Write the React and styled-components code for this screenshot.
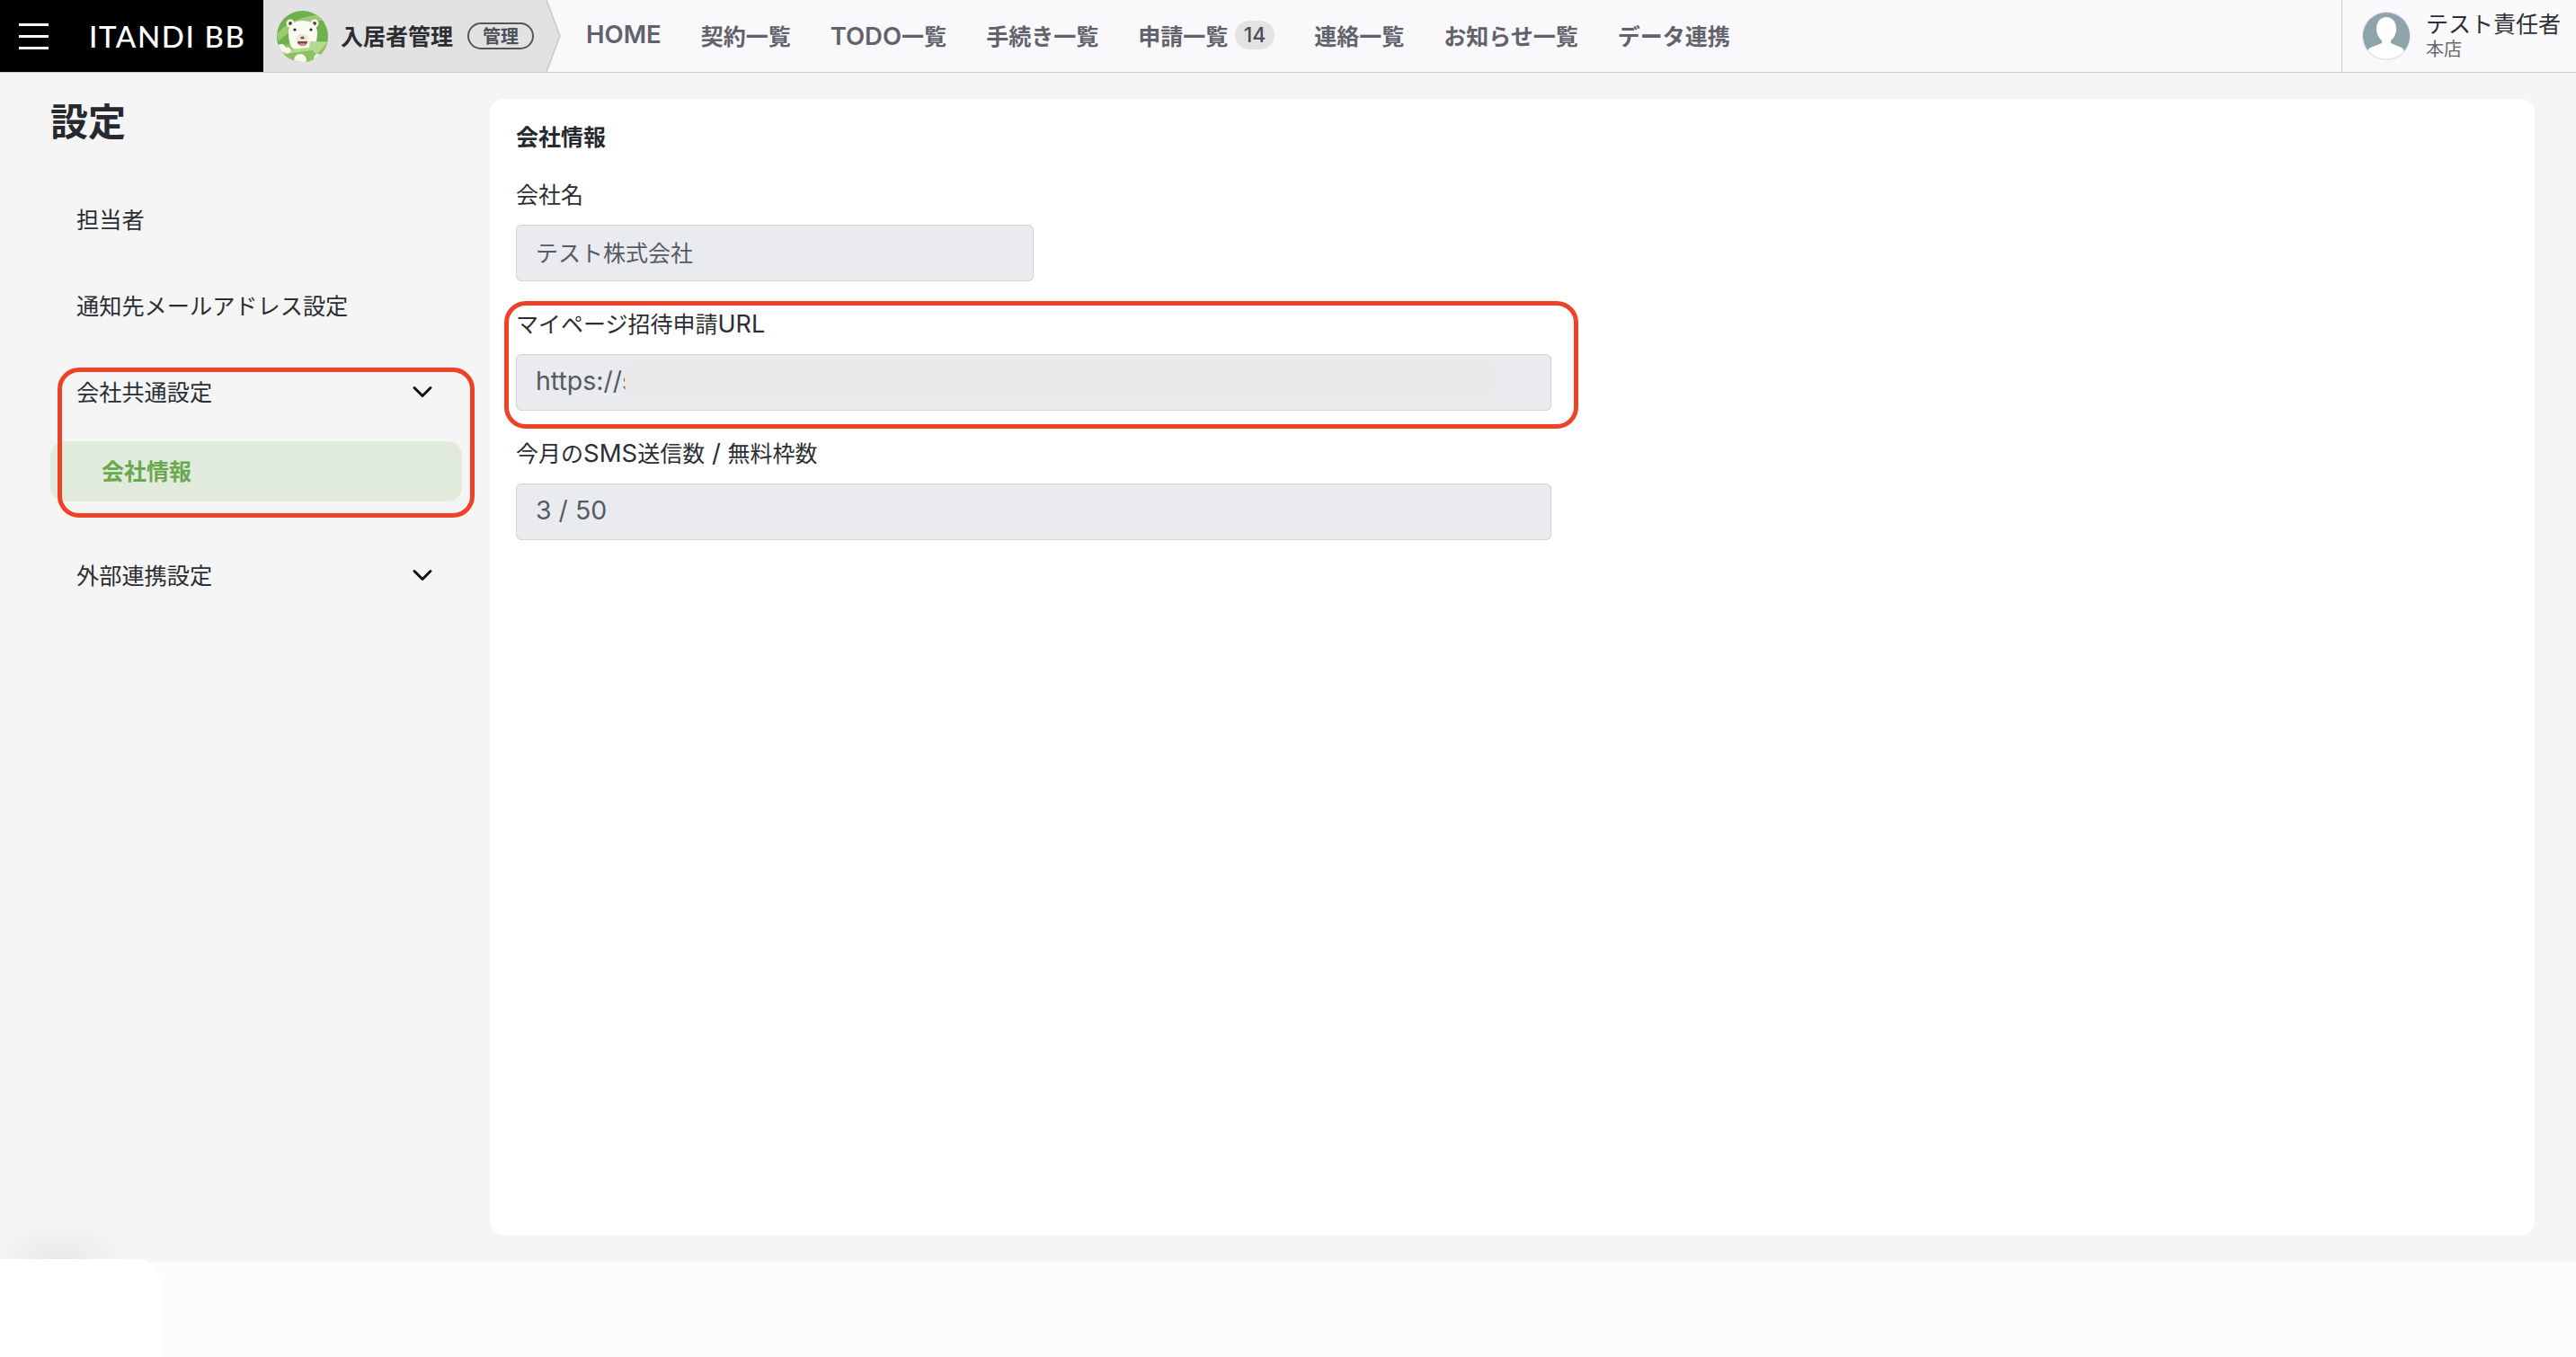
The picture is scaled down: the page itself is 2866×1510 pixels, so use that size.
import React from "react";
import styled, { createGlobalStyle } from "styled-components";
import { ChevronDown } from "lucide-react";

const GlobalStyle = createGlobalStyle`
  html, body {
    margin: 0;
    padding: 0;
    background: #f5f5f5;
  }
  * {
    box-sizing: border-box;
  }
  body {
    font-family: Inter, "Noto Sans CJK JP", sans-serif;
    color: #26292e;
  }
`;

const Page = styled.div`
  width: 2866px;
  height: 1510px;
  display: flex;
  flex-direction: column;
  overflow: hidden;
`;

const Header = styled.header`
  height: 81px;
  flex: none;
  display: flex;
  align-items: stretch;
  background: #f9f9fb;
  border-bottom: 1px solid #cccccc;
`;

const Brand = styled.div`
  width: 293px;
  flex: none;
  display: flex;
  align-items: center;
  gap: 45px;
  padding-left: 21px;
  background: #000;
`;

const Burger = styled.div`
  width: 33px;
  height: 29px;
  display: flex;
  flex-direction: column;
  justify-content: space-between;

  span {
    display: block;
    height: 3px;
    background: #fff;
  }
`;

const Logo = styled.div`
  font-family: Lato, sans-serif;
  font-size: 33px;
  font-weight: 500;
  letter-spacing: 1.6px;
  color: #fff;
  white-space: nowrap;
`;

const Product = styled.div`
  width: 315px;
  flex: none;
  display: flex;
  align-items: center;
  padding-left: 15px;
  background: #e2e2e2;
`;

const ProductName = styled.div`
  margin-left: 14px;
  padding-bottom: 3px;
  font-size: 25px;
  font-weight: 700;
  color: #2b2d31;
  white-space: nowrap;
`;

const RolePill = styled.div`
  margin-left: 16px;
  width: 74px;
  height: 30px;
  display: flex;
  align-items: center;
  justify-content: center;
  padding-bottom: 2px;
  border: 2px solid #55565c;
  border-radius: 15px;
  font-size: 20px;
  font-weight: 700;
  color: #4f5056;
`;

const Tip = styled.svg`
  flex: none;
  display: block;
  width: 16px;
  height: 80px;
`;

const Nav = styled.nav`
  display: flex;
  align-items: center;
  gap: 44px;
  margin-left: 28px;
  padding-bottom: 3px;
`;

const NavItem = styled.div`
  display: flex;
  align-items: center;
  gap: 8px;
  font-size: 25px;
  font-weight: 700;
  color: #62626c;
  white-space: nowrap;
`;

// latin runs sit larger than the japanese around them in the original font
const Latin = styled.span`
  font-size: ${(p) => p.$size || 27.5}px;
  font-weight: ${(p) => p.$weight || "inherit"};
  line-height: 1;
`;

const Badge = styled.span`
  width: 44px;
  height: 32px;
  display: flex;
  align-items: center;
  justify-content: center;
  border-radius: 16px;
  background: #e3e3e3;
  font-size: 23px;
  font-weight: 500;
  color: #4d4d55;
`;

const UserBox = styled.div`
  width: 261px;
  margin-left: auto;
  flex: none;
  display: flex;
  align-items: center;
  gap: 16px;
  padding-left: 21px;
  border-left: 1px solid #cccccc;
`;

const UserText = styled.div`
  display: flex;
  flex-direction: column;
  padding-bottom: 3px;
`;

const UserName = styled.div`
  font-size: 25px;
  line-height: 32px;
  color: #2d2f34;
  white-space: nowrap;
`;

const UserShop = styled.div`
  font-size: 20px;
  line-height: 24px;
  color: #66676d;
`;

const Body = styled.div`
  flex: 1;
  display: flex;
  min-height: 0;
`;

const Sidebar = styled.aside`
  width: 545px;
  flex: none;
  padding: 27px 31px 0 56px;
`;

const Title = styled.h1`
  margin: 0 0 32px;
  font-size: 42px;
  line-height: 56px;
  font-weight: 700;
  color: #26292e;
`;

const MenuRow = styled.div`
  height: 96px;
  display: flex;
  align-items: center;
  justify-content: space-between;
  padding: 0 26px 3px 29px;
  font-size: 25.2px;
  color: #2b2e33;
  white-space: nowrap;

  svg {
    margin-top: 3px;
    color: #111;
  }
`;

const MenuGroup = styled.div`
  position: relative;
  padding-bottom: 34px;
`;

const SubItem = styled.div`
  height: 67px;
  margin-top: 7px;
  display: flex;
  align-items: center;
  padding: 0 0 4px 57px;
  border-radius: 16px;
  background: #e0ebdb;
  font-size: 25px;
  font-weight: 700;
  color: #6aa84f;
`;

// red annotation drawn over the screenshot
const Highlight = styled.div`
  position: absolute;
  top: ${(p) => p.$top}px;
  right: ${(p) => p.$right}px;
  bottom: ${(p) => p.$bottom}px;
  left: ${(p) => p.$left}px;
  border: 5px solid #ee4227;
  border-radius: 24px;
  pointer-events: none;
`;

const Main = styled.main`
  flex: 1;
  padding: 29px 46px 29px 0;
`;

const Card = styled.section`
  height: 100%;
  padding: 25px 29px;
  border-radius: 16px;
  background: #fff;
`;

const CardTitle = styled.h2`
  margin: 0 0 29px;
  font-size: 25px;
  line-height: 36px;
  font-weight: 700;
  color: #26292e;
`;

const Field = styled.div`
  position: relative;
  width: ${(p) => (p.$wide ? 1152 : 576)}px;
  margin-bottom: 31px;
`;

const Label = styled.div`
  margin-bottom: 16px;
  font-size: 25px;
  line-height: 34px;
  color: #2b2e33;
  white-space: nowrap;
`;

const Input = styled.div`
  position: relative;
  height: 63px;
  display: flex;
  align-items: center;
  padding: 0 21px 3px;
  border: 1px solid #cfd3d8;
  border-radius: 6px;
  background: #e9ebee;
  font-size: 25px;
  color: #555b62;
  overflow: hidden;
  white-space: pre;
`;

// blur patch hiding the rest of the address
const Smudge = styled.div`
  position: absolute;
  top: 6px;
  bottom: 14px;
  left: 120px;
  right: 60px;
  border-radius: 14px;
  background: #e9e9e9;
`;

const Footer = styled.footer`
  position: relative;
  height: 106px;
  flex: none;
  background: #fcfcfc;
`;

const FooterTab = styled.div`
  position: absolute;
  top: -3px;
  bottom: 0;
  left: 0;
  width: 178px;
  border-top-right-radius: 24px;
  background: #fff;

  &::before {
    content: "";
    position: absolute;
    top: -42px;
    left: 0;
    width: 150px;
    height: 42px;
    background: radial-gradient(ellipse 75px 42px at 45% 100%, #e8e8e8, rgba(245, 245, 245, 0));
  }
`;

const BearIcon = styled.svg`
  flex: none;
  display: block;
  width: 57px;
  height: 57px;
`;

const AvatarIcon = styled.svg`
  flex: none;
  display: block;
  width: 56px;
  height: 56px;
`;

const Bear = () => (
  <BearIcon viewBox="0 0 57 57">
    <defs>
      <clipPath id="bearClip">
        <circle cx="28.5" cy="28.5" r="28.5" />
      </clipPath>
    </defs>
    <g clipPath="url(#bearClip)">
      <rect width="57" height="57" fill="#6fb04c" />
      <path d="M0 26C12 12 30 5 52 4l5 6C36 11 18 18 2 34Z" fill="#9ccb74" />
      <path d="M0 42l14-6 32 6 11-8v23H0Z" fill="#8cc063" />
      <circle cx="15" cy="14" r="4.5" fill="#f8f6ec" />
      <circle cx="15" cy="14" r="2" fill="#55493f" />
      <circle cx="42" cy="14" r="4.5" fill="#f8f6ec" />
      <circle cx="42" cy="14" r="2" fill="#55493f" />
      <path d="M13 24c0-9 7-13 15.500-13S45 15 45 24c0 6-1 11-3 15-3 4-8 6-13.500 6S18 43 15.500 39C14 35 13 30 13 24Z" fill="#fbfaf2" />
      <circle cx="20" cy="21" r="1.600" fill="#2c2a28" />
      <circle cx="38" cy="21" r="1.600" fill="#2c2a28" />
      <ellipse cx="28.500" cy="31" rx="6.500" ry="5.500" fill="#ece7da" />
      <ellipse cx="28.500" cy="30" rx="2.200" ry="1.500" fill="#6d5a50" />
      <path d="M23 34h11c0 3.500-2.500 5-5.500 5S23 37.500 23 34Z" fill="#8a3f3c" />
      <path d="M24.500 36.500h8c-.8 1.500-2.400 2.200-4 2.200s-3.200-.7-4-2.200Z" fill="#e9a29a" />
      <path d="M4 44l32-3 1-7 20 .5L44 49l-4-5L8 48Z" fill="#b4d98f" />
      <circle cx="5" cy="42" r="5" fill="#f8f6ec" />
      <circle cx="12" cy="44" r="3.500" fill="#f8f6ec" />
      <circle cx="26" cy="55" r="7" fill="#f8f6ec" />
      <circle cx="46" cy="53" r="5" fill="#eef0e2" />
    </g>
  </BearIcon>
);

const Avatar = () => (
  <AvatarIcon viewBox="0 0 56 56">
    <defs>
      <clipPath id="avatarClip">
        <circle cx="28" cy="28" r="26" />
      </clipPath>
    </defs>
    <circle cx="28" cy="28" r="27" fill="#dfe3e5" />
    <g clipPath="url(#avatarClip)">
      <rect width="56" height="56" fill="#8fa3aa" />
      <path d="M17 20c0-8 5-13 11-13s11 5 11 13c0 6-3 11-6 13v3l12 5c3 2 4 5 4 15H6c0-10 1-13 4-15l13-5v-3c-3-2-6-7-6-13Z" fill="#fff" />
    </g>
  </AvatarIcon>
);

export default function App() {
  return (
    <Page>
      <GlobalStyle />
      <Header>
        <Brand>
          <Burger>
            <span />
            <span />
            <span />
          </Burger>
          <Logo>ITANDI BB</Logo>
        </Brand>
        <Product>
          <Bear />
          <ProductName>入居者管理</ProductName>
          <RolePill>管理</RolePill>
        </Product>
        <Tip viewBox="0 0 16 80">
          <path d="M0 0L15 40L0 80Z" fill="#e2e2e2" />
          <path d="M0 0L15 40L0 80" fill="none" stroke="#c9c9c9" strokeWidth="1.500" />
        </Tip>
        <Nav>
          <NavItem>
            <Latin $weight={600}>HOME</Latin>
          </NavItem>
          <NavItem>契約一覧</NavItem>
          <NavItem>
            <span>
              <Latin $weight={600}>TODO</Latin>一覧
            </span>
          </NavItem>
          <NavItem>手続き一覧</NavItem>
          <NavItem>
            申請一覧
            <Badge>14</Badge>
          </NavItem>
          <NavItem>連絡一覧</NavItem>
          <NavItem>お知らせ一覧</NavItem>
          <NavItem>データ連携</NavItem>
        </Nav>
        <UserBox>
          <Avatar />
          <UserText>
            <UserName>テスト責任者</UserName>
            <UserShop>本店</UserShop>
          </UserText>
        </UserBox>
      </Header>
      <Body>
        <Sidebar>
          <Title>設定</Title>
          <MenuRow>担当者</MenuRow>
          <MenuRow>通知先メールアドレス設定</MenuRow>
          <MenuGroup>
            <MenuRow>
              会社共通設定
              <ChevronDown size={36} strokeWidth={2} />
            </MenuRow>
            <SubItem>会社情報</SubItem>
            <Highlight $top={21} $right={-14} $bottom={16} $left={8} />
          </MenuGroup>
          <MenuRow>
            外部連携設定
            <ChevronDown size={36} strokeWidth={2} />
          </MenuRow>
        </Sidebar>
        <Main>
          <Card>
            <CardTitle>会社情報</CardTitle>
            <Field>
              <Label>会社名</Label>
              <Input>テスト株式会社</Input>
            </Field>
            <Field $wide>
              <Label>
                マイページ招待申請<Latin $size={27}>URL</Latin>
              </Label>
              <Input>
                <Latin $size={28.5}>https://s</Latin>
                <Smudge />
              </Input>
              <Highlight $top={-9} $right={-30} $bottom={-20} $left={-13} />
            </Field>
            <Field $wide>
              <Label>
                今月の<Latin>SMS</Latin>送信数<Latin> / </Latin>無料枠数
              </Label>
              <Input>
                <Latin $size={28.5}>3 / 50</Latin>
              </Input>
            </Field>
          </Card>
        </Main>
      </Body>
      <Footer>
        <FooterTab />
      </Footer>
    </Page>
  );
}
